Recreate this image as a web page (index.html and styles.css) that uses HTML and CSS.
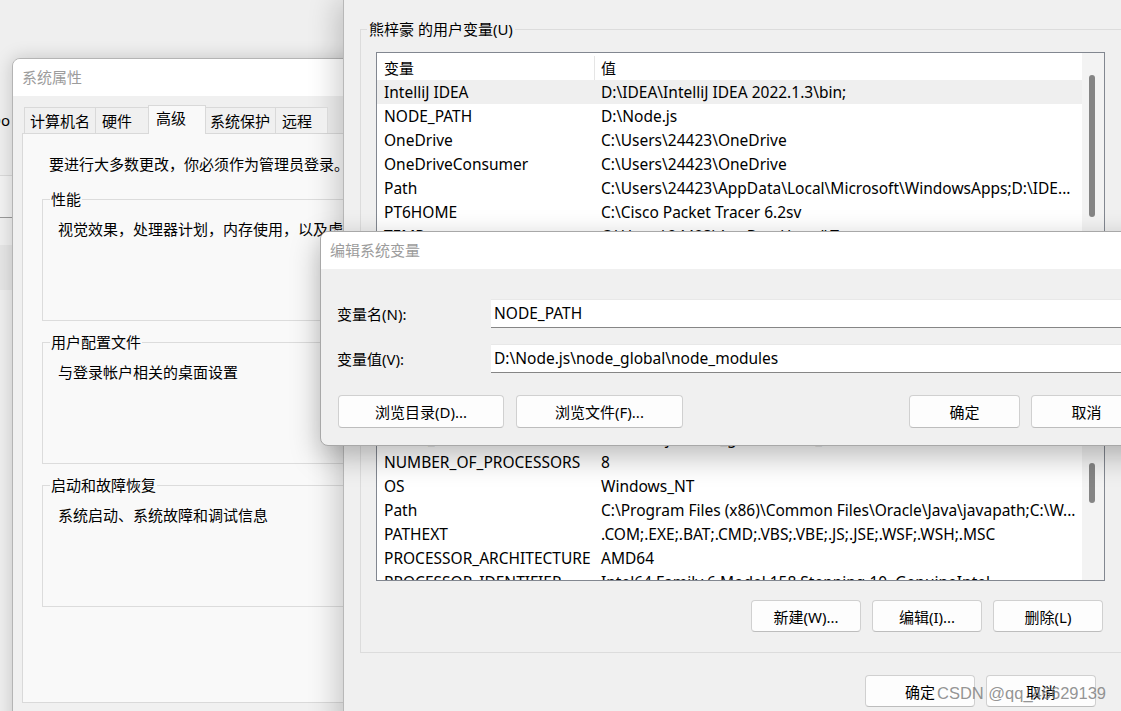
FILE: index.html
```html
<!DOCTYPE html>
<html lang="zh-CN">
<head>
<meta charset="utf-8">
<title>编辑系统变量</title>
<link rel="stylesheet" href="styles.css">
</head>
<body>
<div class="bgapp">
  <div class="bg-b1"><span class="bg-text">Do</span></div>
  <div class="bg-b2"></div>
  <div class="bg-b3"></div>
  <div class="bg-b4"></div>
  <div class="bg-b5"></div>
</div>

<div class="win sysprops">
  <div class="titlebar">系统属性</div>
  <div class="sp-body">
    <div class="tabs">
      <div class="tab t1">计算机名</div>
      <div class="tab t2">硬件</div>
      <div class="tab t3 active">高级</div>
      <div class="tab t4">系统保护</div>
      <div class="tab t5">远程</div>
    </div>
    <div class="tabpanel">
      <div class="note">要进行大多数更改，你必须作为管理员登录。</div>
      <div class="sp-group">
        <div class="group-title">性能</div>
        <div class="sp-desc">视觉效果，处理器计划，内存使用，以及虚拟内存</div>
      </div>
      <div class="sp-group">
        <div class="group-title">用户配置文件</div>
        <div class="sp-desc">与登录帐户相关的桌面设置</div>
      </div>
      <div class="sp-group">
        <div class="group-title">启动和故障恢复</div>
        <div class="sp-desc">系统启动、系统故障和调试信息</div>
      </div>
    </div>
  </div>
</div>

<div class="win envvars">
  <div class="env-group">
    <div class="group-title">熊梓豪 的用户变量(U)</div>
    <div class="list user">
      <div class="list-main">
        <div class="lrow head"><span class="c1">变量</span><span class="c2">值</span></div>
        <div class="lrow sel"><span class="c1">IntelliJ IDEA</span><span class="c2">D:\IDEA\IntelliJ IDEA 2022.1.3\bin;</span></div>
        <div class="lrow"><span class="c1">NODE_PATH</span><span class="c2">D:\Node.js</span></div>
        <div class="lrow"><span class="c1">OneDrive</span><span class="c2">C:\Users\24423\OneDrive</span></div>
        <div class="lrow"><span class="c1">OneDriveConsumer</span><span class="c2">C:\Users\24423\OneDrive</span></div>
        <div class="lrow"><span class="c1">Path</span><span class="c2">C:\Users\24423\AppData\Local\Microsoft\WindowsApps;D:\IDE...</span></div>
        <div class="lrow"><span class="c1">PT6HOME</span><span class="c2">C:\Cisco Packet Tracer 6.2sv</span></div>
        <div class="lrow"><span class="c1">TEMP</span><span class="c2">C:\Users\24423\AppData\Local\Temp</span></div>
        <div class="lrow"><span class="c1">TMP</span><span class="c2">C:\Users\24423\AppData\Local\Temp</span></div>
      </div>
      <div class="vscroll"><div class="thumb thumb-user"></div></div>
    </div>
    <div class="grp-buttons">
      <button class="btn">新建(N)...</button>
      <button class="btn">编辑(E)...</button>
      <button class="btn">删除(D)</button>
    </div>
  </div>

  <div class="env-group sys">
    <div class="group-title">系统变量(S)</div>
    <div class="list sysl">
      <div class="list-main">
        <div class="lrow head"><span class="c1">变量</span><span class="c2">值</span></div>
        <div class="lrow"><span class="c1">ComSpec</span><span class="c2">C:\WINDOWS\system32\cmd.exe</span></div>
        <div class="lrow"><span class="c1">DriverData</span><span class="c2">C:\Windows\System32\Drivers\DriverData</span></div>
        <div class="lrow"><span class="c1">NODE_PATH</span><span class="c2">D:\Node.js\node_global\node_modules</span></div>
        <div class="lrow"><span class="c1">NUMBER_OF_PROCESSORS</span><span class="c2">8</span></div>
        <div class="lrow"><span class="c1">OS</span><span class="c2">Windows_NT</span></div>
        <div class="lrow"><span class="c1">Path</span><span class="c2">C:\Program Files (x86)\Common Files\Oracle\Java\javapath;C:\W...</span></div>
        <div class="lrow"><span class="c1">PATHEXT</span><span class="c2">.COM;.EXE;.BAT;.CMD;.VBS;.VBE;.JS;.JSE;.WSF;.WSH;.MSC</span></div>
        <div class="lrow"><span class="c1">PROCESSOR_ARCHITECTURE</span><span class="c2">AMD64</span></div>
        <div class="lrow"><span class="c1">PROCESSOR_IDENTIFIER</span><span class="c2">Intel64 Family 6 Model 158 Stepping 10, GenuineIntel</span></div>
      </div>
      <div class="vscroll"><div class="thumb thumb-sys"></div></div>
    </div>
    <div class="grp-buttons">
      <button class="btn">新建(W)...</button>
      <button class="btn">编辑(I)...</button>
      <button class="btn">删除(L)</button>
    </div>
  </div>

  <div class="env-footer">
    <button class="btn">确定</button>
    <button class="btn">取消</button>
  </div>
</div>

<div class="win editdlg">
  <div class="titlebar">编辑系统变量</div>
  <div class="ed-body">
    <div class="ed-form">
      <label class="ed-label">变量名(N):</label>
      <div class="ed-input">NODE_PATH</div>
      <label class="ed-label">变量值(V):</label>
      <div class="ed-input">D:\Node.js\node_global\node_modules</div>
    </div>
    <div class="ed-buttons">
      <button class="btn b-dir">浏览目录(D)...</button>
      <button class="btn b-file">浏览文件(F)...</button>
      <span class="spacer"></span>
      <button class="btn b-ok">确定</button>
      <button class="btn b-ok">取消</button>
    </div>
  </div>
</div>

<div class="watermark">CSDN @qq_46629139</div>
</body>
</html>
```

FILE: styles.css
```css
* { box-sizing: border-box; }
html, body { margin: 0; padding: 0; }
body {
  width: 1121px;
  height: 711px;
  overflow: hidden;
  position: relative;
  background: #efefef;
  font-family: "Noto Sans", "Noto Sans CJK SC", sans-serif;
  font-size: 15px;
  line-height: 20px;
  color: #000;
}

/* background app peeking on the left */
.bgapp {
  position: absolute;
  left: 0;
  top: 0;
  width: 12px;
  height: 711px;
  display: flex;
  flex-direction: column;
  overflow: hidden;
}
.bg-b1 {
  height: 176px;
  background: #efefef;
  border-bottom: 1px solid #dadada;
  display: flex;
  justify-content: flex-end;
  padding-top: 110px;
  padding-right: 2px;
}
.bg-text { white-space: nowrap; }
.bg-b2 { height: 42px; background: #f3f3f3; border-bottom: 1px solid #9a9a9a; }
.bg-b3 { height: 27px; background: #f0f0f0; }
.bg-b4 { height: 45px; background: #e6e6e6; }
.bg-b5 { flex: 1; background: #efefef; }

.win { position: absolute; }

.titlebar {
  height: 37px;
  line-height: 37px;
  background: #fff;
  color: #9c9c9c;
  padding-left: 9px;
}

/* System properties */
.sysprops {
  left: 12px;
  top: 58px;
  width: 420px;
  height: 690px;
  border: 1px solid #b4b4b4;
  border-radius: 8px 8px 0 0;
  background: #f0f0f0;
  overflow: hidden;
  box-shadow: 0 0 18px rgba(0, 0, 0, 0.18);
}
.sp-body { padding: 11px 0 0 9px; }
.tabs {
  display: flex;
  height: 26px;
  margin-left: 2px;
  position: relative;
  z-index: 1;
}
.tab {
  height: 26px;
  line-height: 26px;
  border: 1px solid #d9d9d9;
  border-bottom: none;
  padding-left: 5px;
  background: #f0f0f0;
  white-space: nowrap;
}
.tab + .tab { margin-left: -1px; }
.t1 { width: 72px; }
.t2 { width: 54px; padding-left: 6px; }
.t3 { width: 58px; padding-left: 7px; }
.t4 { width: 71px; padding-left: 4px; }
.t5 { width: 53px; padding-left: 6px; }
.tab.active {
  height: 29px;
  margin-top: -2px;
  line-height: 24px;
  background: #f9f9f9;
  position: relative;
  z-index: 2;
}
.tabpanel {
  height: 570px;
  width: 400px;
  border: 1px solid #d9d9d9;
  background: #f9f9f9;
  padding: 20px 0 0 19px;
}
.note { margin-left: 7px; white-space: nowrap; }
.sp-group {
  margin-top: 25px;
  height: 122px;
  border: 1px solid #dcdcdc;
  background: #f9f9f9;
}
.sp-group + .sp-group { margin-top: 21px; }
.group-title {
  display: block;
  width: fit-content;
  margin: -11px 0 0 7px;
  padding: 0 1px;
  background: inherit;
  white-space: nowrap;
}
.sp-desc { margin-top: 10px; padding-left: 15px; white-space: nowrap; }

/* Environment variables window */
.envvars {
  left: 343px;
  top: 0;
  width: 796px;
  height: 740px;
  background: #f0f0f0;
  border-left: 1px solid #b8b8b8;
  padding: 29px 17px 0 16px;
  box-shadow: -6px 0 28px rgba(0, 0, 0, 0.2);
}
.env-group {
  border: 1px solid #dcdcdc;
  background: #f0f0f0;
  padding: 0 16px 20px 15px;
}
.env-group .group-title { margin-left: -9px; padding: 0 2px; }
.env-group.sys { margin-top: 20px; }
.list {
  display: flex;
  margin-top: 13px;
  border: 1px solid #828790;
  background: #fff;
  overflow: hidden;
}
.list.user { height: 183px; }
.list.sysl { height: 231px; }
.list-main { flex: 1; min-width: 0; }
.lrow {
  display: flex;
  height: 24px;
  line-height: 24px;
  white-space: nowrap;
  font-size: 15.5px;
}
.lrow.head { height: 27px; padding-top: 3px; font-size: 15px; }
.c1 { width: 218px; flex: none; padding-left: 7px; overflow: hidden; }
.head .c1 { border-right: 1px solid #e5e5e5; }
.c2 { flex: 1; min-width: 0; padding-left: 6px; overflow: hidden; }
.lrow.sel { background: #efefef; }
.vscroll { width: 22px; flex: none; background: #f3f3f3; }
.thumb { width: 6px; margin-left: 7px; background: #858585; border-radius: 3px; }
.thumb-user { margin-top: 22px; height: 142px; }
.thumb-sys { margin-top: 112px; height: 40px; }

.grp-buttons {
  display: flex;
  justify-content: flex-end;
  gap: 11px;
  margin-top: 19px;
  margin-right: 2px;
}
.btn {
  width: 110px;
  height: 32px;
  padding: 0;
  border: 1px solid #d0d0d0;
  border-bottom-color: #bdbdbd;
  border-radius: 4px;
  background: #fdfdfd;
  font-family: inherit;
  font-size: 15px;
  color: #000;
}
.env-footer {
  display: flex;
  justify-content: flex-end;
  gap: 11px;
  margin-top: 22px;
  padding-right: 26px;
}

/* Edit system variable dialog */
.editdlg {
  left: 320px;
  top: 231px;
  width: 840px;
  height: 215px;
  border: 1px solid #a8a8a8;
  border-radius: 8px;
  background: #f0f0f0;
  overflow: hidden;
  box-shadow: 0 10px 30px rgba(0, 0, 0, 0.28);
}
.ed-body { padding: 30px 17px 0 16px; }
.ed-form {
  display: grid;
  grid-template-columns: 154px 1fr;
  grid-auto-rows: 29px;
  row-gap: 16px;
}
.ed-label { display: flex; align-items: center; padding-top: 1px; }
.ed-input {
  background: #fff;
  border-top: 1px solid #e8e8e8;
  border-bottom: 1px solid #868686;
  padding-left: 3px;
  line-height: 27px;
  white-space: nowrap;
  font-size: 15.5px;
}
.ed-buttons {
  display: flex;
  margin-top: 22px;
  margin-left: 1px;
}
.ed-buttons .btn { height: 33px; }
.b-dir { width: 166px; }
.b-file { width: 167px; margin-left: 12px; }
.spacer { flex: 1; }
.b-ok { width: 111px; }
.b-ok + .b-ok { margin-left: 11px; }

.watermark {
  position: absolute;
  left: 937px;
  top: 682px;
  font-family: "Liberation Sans", sans-serif;
  font-size: 16.5px;
  line-height: 22px;
  color: rgba(120, 120, 120, 0.8);
  white-space: nowrap;
}
```
